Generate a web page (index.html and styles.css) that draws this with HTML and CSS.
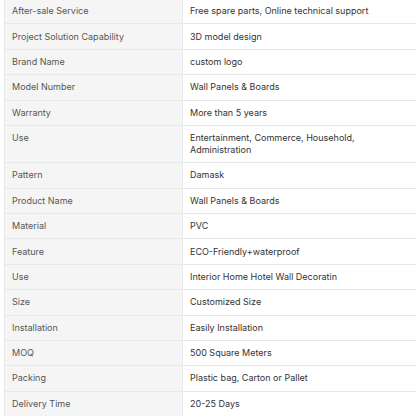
FILE: index.html
```
<!DOCTYPE html>
<html>
<head>
<meta charset="utf-8">
<link rel="stylesheet" href="styles.css">
</head>
<body>
<div class="wrap">
<table class="spec">
<tbody>
<tr><td class="k">After-sale Service</td><td class="v">Free spare parts, Online technical support</td></tr>
<tr><td class="k">Project Solution Capability</td><td class="v">3D model design</td></tr>
<tr><td class="k">Brand Name</td><td class="v">custom logo</td></tr>
<tr><td class="k">Model Number</td><td class="v">Wall Panels &amp; Boards</td></tr>
<tr><td class="k">Warranty</td><td class="v">More than 5 years</td></tr>
<tr><td class="k">Use</td><td class="v">Entertainment, Commerce, Household,<br>Administration</td></tr>
<tr><td class="k">Pattern</td><td class="v">Damask</td></tr>
<tr><td class="k">Product Name</td><td class="v">Wall Panels &amp; Boards</td></tr>
<tr><td class="k">Material</td><td class="v">PVC</td></tr>
<tr><td class="k">Feature</td><td class="v">ECO-Friendly+waterproof</td></tr>
<tr><td class="k">Use</td><td class="v">Interior Home Hotel Wall Decoratin</td></tr>
<tr><td class="k">Size</td><td class="v">Customized Size</td></tr>
<tr><td class="k">Installation</td><td class="v">Easily Installation</td></tr>
<tr><td class="k">MOQ</td><td class="v">500 Square Meters</td></tr>
<tr><td class="k">Packing</td><td class="v">Plastic bag, Carton or Pallet</td></tr>
<tr><td class="k">Delivery Time</td><td class="v">20-25 Days</td></tr>
</tbody>
</table>
</div>
</body>
</html>
```
FILE: styles.css
```
html, body {
  margin: 0;
  padding: 0;
  background: #ffffff;
  overflow: hidden;
}
.wrap {
  margin-left: 4px;
  margin-top: -2px;
  width: 412px;
  overflow: hidden;
}
.spec {
  border-collapse: collapse;
  width: 440px;
  font-family: Inter, "Noto Sans", sans-serif;
  font-size: 9px;
  line-height: 12px;
  color: #333333;
}
.spec td {
  border: 1px solid #e8e8e8;
  padding: 6.2px 7px;
  vertical-align: top;
  text-align: left;
}
.spec .k {
  width: 163px;
  background: #f5f5f5;
  color: #555555;
}
.spec .v {
  background: #ffffff;
  color: #333333;
}
```
